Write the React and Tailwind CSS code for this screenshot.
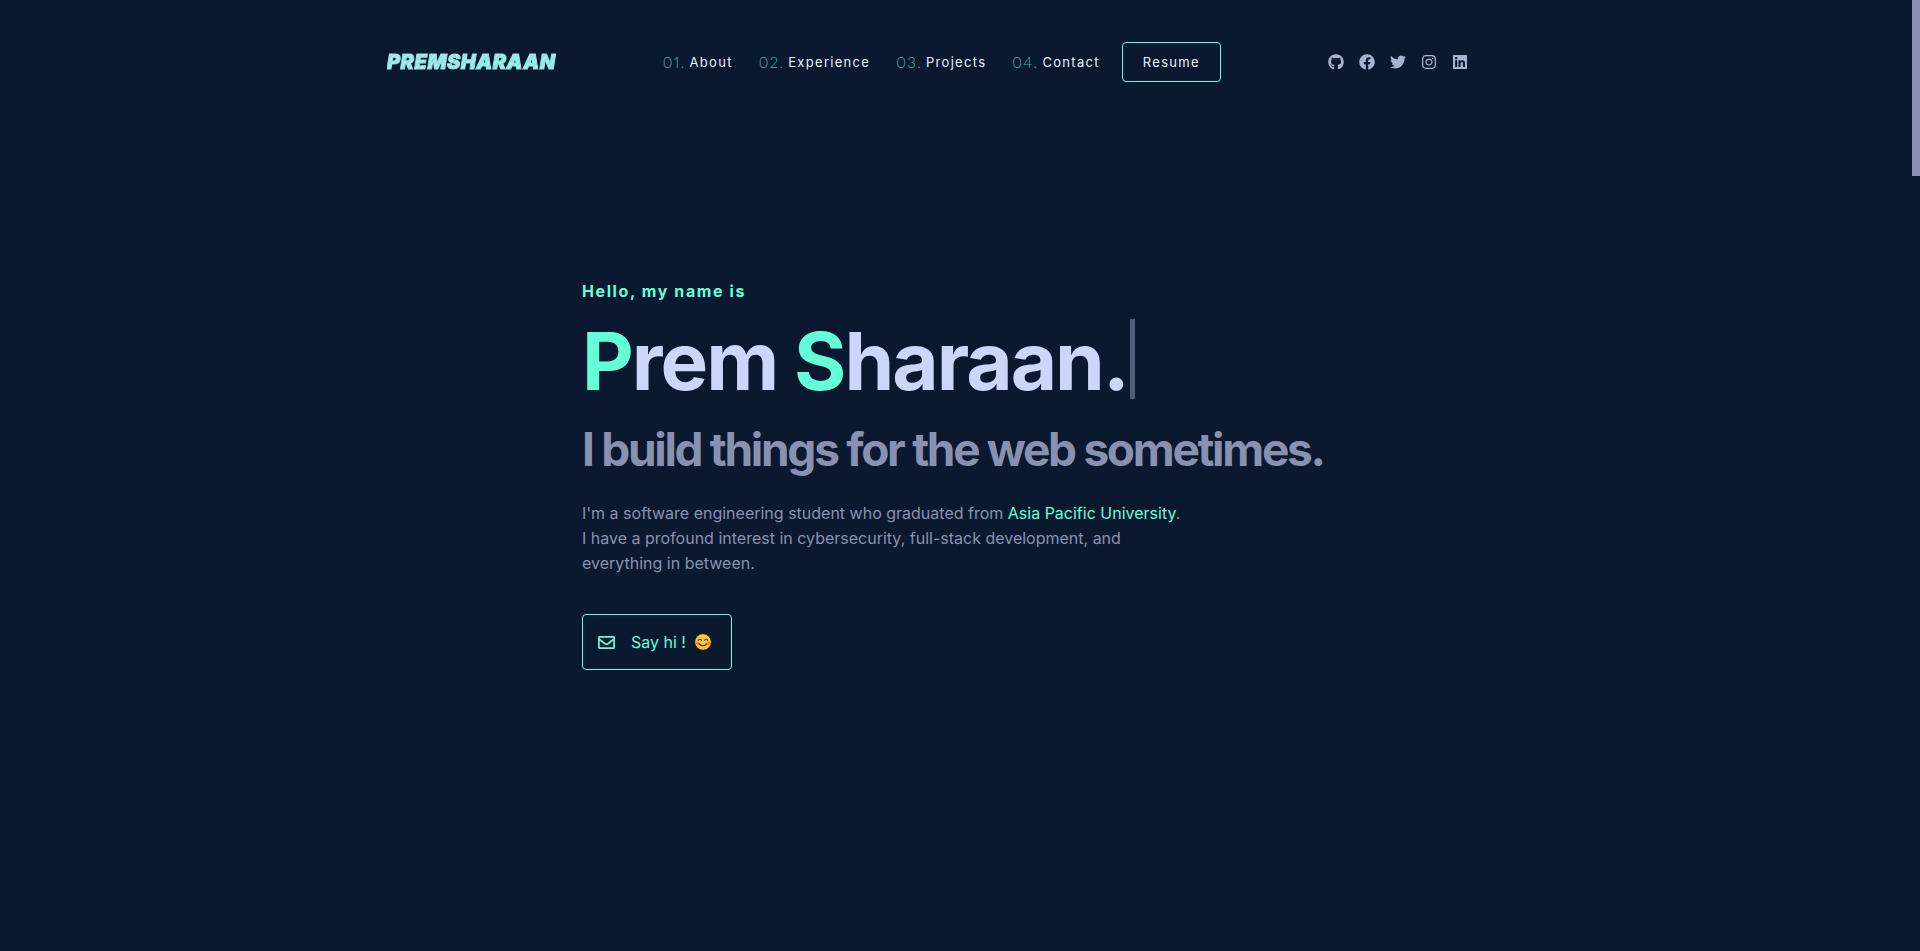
import { FaGithub, FaFacebook, FaTwitter, FaInstagram, FaLinkedin } from "react-icons/fa";

const links = [
  { num: "01.", label: "About" },
  { num: "02.", label: "Experience" },
  { num: "03.", label: "Projects" },
  { num: "04.", label: "Contact" },
];

const socials = [
  { label: "GitHub", Icon: FaGithub },
  { label: "Facebook", Icon: FaFacebook },
  { label: "Twitter", Icon: FaTwitter },
  { label: "Instagram", Icon: FaInstagram },
  { label: "LinkedIn", Icon: FaLinkedin },
];

function Header() {
  return (
    <header className="py-[42px]">
      <div className="mx-auto flex h-10 w-full max-w-[1138px] items-center justify-between pr-[57px]">
        <a
          href="#home"
          className="bg-[repeating-linear-gradient(-45deg,#64ffda_0px,#64ffda_2px,#ccd6f6_2px,#ccd6f6_4px)] bg-clip-text text-[20px] leading-6 font-black tracking-wide text-transparent italic [-webkit-text-stroke:1px_transparent]"
        >
          PREMSHARAAN
        </a>
        <nav className="flex items-center gap-[22px]">
          <ul className="flex items-center gap-[26px]">
            {links.map(({ num, label }) => (
              <li key={label}>
                <a href={`#${label.toLowerCase()}`} className="flex items-center gap-1 text-[13px] leading-5 tracking-widest text-[#e6f1ff]">
                  <span className="font-['Lato',sans-serif] text-[15px] font-light text-[#45b5a2] proportional-nums">{num}</span>
                  {label}
                </a>
              </li>
            ))}
          </ul>
          <button className="h-10 rounded border border-[#64ffda] px-5 text-[13px] leading-5 tracking-widest text-[#e6f1ff]">
            Resume
          </button>
        </nav>
        <div className="flex items-center gap-[15px] text-[#a8b2d1]">
          {socials.map(({ label, Icon }) => (
            <a key={label} href={`#${label.toLowerCase()}`} aria-label={label}>
              <Icon className="size-4" />
            </a>
          ))}
        </div>
      </div>
    </header>
  );
}

function Hero() {
  return (
    <main className="mx-auto w-full max-w-[748px] pt-[155px]">
      <p className="text-[16px] leading-6 font-bold tracking-widest text-[#64ffda]">Hello, my name is</p>
      <h1 className="mt-4 flex items-start gap-0.5 text-[80px] leading-[84px] font-bold tracking-tight whitespace-nowrap text-[#ccd6f6]">
        <span>
          <span className="text-[#64ffda]">P</span>rem <span className="text-[#64ffda]">S</span>haraan.
        </span>
        <span className="h-20 w-[5px] bg-[#505d78]" />
      </h1>
      <h2 className="mt-[18px] text-[46px] leading-[56px] font-bold tracking-tighter whitespace-nowrap text-[#8892b0]">
        I build things for the web sometimes.
      </h2>
      <p className="mt-6 max-w-[600px] text-[16px] leading-[25px] text-[#8892b0]">
        I'm a software engineering student who graduated from{" "}
        <a href="#apu" className="text-[#64ffda]">Asia Pacific University</a>. I have a profound interest in
        cybersecurity, full-stack development, and everything in between.
      </p>
      <a href="#contact" className="mt-[38px] inline-flex h-14 w-[150px] items-center rounded border border-[#64ffda] pl-[15px] text-[16px] leading-6 text-[#64ffda]">
        <svg viewBox="0 0 17 17" className="size-[17px]" fill="none" stroke="currentColor" strokeWidth="1.7" aria-hidden="true">
          <rect x=".9" y="2.9" width="15.2" height="11.2" rx=".6" />
          <path d="M1.2 5.2l5.9 4.5q1.4 1 2.8 0l5.9-4.5" />
        </svg>
        <span className="ml-4">Say hi !</span>
        <svg viewBox="0 0 18 18" className="ml-2 size-[18px]" role="img" aria-label="smiling face">
          <circle cx="9" cy="9" r="8.3" fill="#fcc33c" stroke="#2b1c08" strokeWidth=".8" />
          <circle cx="3.7" cy="10.2" r="1.7" fill="#f28252" />
          <circle cx="14.3" cy="10.2" r="1.7" fill="#f28252" />
          <path d="M4.2 7.3q1.6-2.2 3.2 0M10.6 7.3q1.6-2.2 3.2 0M5.2 10.8q3.8 4 7.6 0" fill="none" stroke="#46301a" strokeWidth="1.1" strokeLinecap="round" />
        </svg>
      </a>
    </main>
  );
}

export default function App() {
  return (
    <div className="min-h-screen bg-[#0a192f] pr-2 font-['Inter',sans-serif]">
      <Header />
      <Hero />
      <div aria-hidden="true" className="fixed top-0 right-0 h-44 w-2 bg-[#8892b0]" />
    </div>
  );
}
